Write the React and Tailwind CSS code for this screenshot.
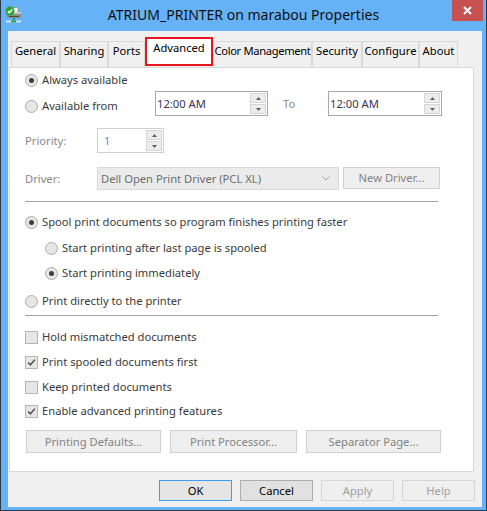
import React from 'react';

const font = { fontFamily: '"Noto Sans", "Liberation Sans", sans-serif' };

function PrinterIcon() {
  return (
    <svg width="17" height="17" viewBox="0 0 17 17">
      <rect x="5" y="1.5" width="8" height="5" fill="#fff" stroke="#9a9a9a" />
      <rect x="2" y="6" width="14" height="6" fill="#8c8c8c" />
      <rect x="2" y="6" width="14" height="2" fill="#c9c9c9" />
      <rect x="4" y="10" width="10" height="1" fill="#4a4a4a" />
      <rect x="8" y="12" width="2" height="3" fill="#1fa35a" />
      <rect x="1" y="14.5" width="15" height="2" fill="#cfe3ea" />
      <rect x="6" y="14.5" width="5" height="2" fill="#1fa35a" />
      <circle cx="5" cy="5" r="4.5" fill="#2aa52a" />
      <path d="M2.8 5.1 L4.4 6.7 L7.3 3.4" stroke="#fff" strokeWidth="1.5" fill="none" />
    </svg>
  );
}

function Radio({ checked, label }) {
  return (
    <div className="flex items-center gap-[4px]">
      <span className="flex h-[13px] w-[13px] items-center justify-center rounded-full border border-[#adadad] bg-[#e6e6e6]">
        {checked && <span className="h-[5px] w-[5px] rounded-full bg-[#3f3f3f]" />}
      </span>
      <span className="text-[#3a3a3a]">{label}</span>
    </div>
  );
}

function Check({ checked, label }) {
  return (
    <div className="flex items-center gap-[4px]">
      <span className="flex h-[13px] w-[13px] items-center justify-center border border-[#b5b5b5] bg-[#e6e6e6]">
        {checked && (
          <svg width="9" height="9" viewBox="0 0 9 9">
            <path d="M1.2 4.6 L3.4 6.8 L7.8 1.8" stroke="#555" strokeWidth="1.6" fill="none" />
          </svg>
        )}
      </span>
      <span className="text-[#3a3a3a]">{label}</span>
    </div>
  );
}

function Spin() {
  return (
    <div className="flex h-full w-[17px] flex-col gap-[1px] py-[1px] pr-[1px]">
      <div className="flex flex-1 items-center justify-center border border-[#d6d6d6] bg-[#ececec]">
        <svg width="5" height="3" viewBox="0 0 5 3"><path d="M0 3 L2.5 0 L5 3 Z" fill="#606060" /></svg>
      </div>
      <div className="flex flex-1 items-center justify-center border border-[#d6d6d6] bg-[#ececec]">
        <svg width="5" height="3" viewBox="0 0 5 3"><path d="M0 0 L2.5 3 L5 0 Z" fill="#606060" /></svg>
      </div>
    </div>
  );
}

function TimeBox({ w }) {
  return (
    <div className={`flex h-[25px] ${w} items-center justify-between border border-[#a9a9a9] bg-white pl-[1px]`}>
      <span className="text-[#3a3050]">12:00 AM</span>
      <Spin />
    </div>
  );
}

const tabs = [
  ['General', 'w-[49px]'],
  ['Sharing', 'w-[48px]'],
  ['Ports', 'w-[37px]'],
  ['Advanced', 'w-[68px]'],
  ['Color Management', 'w-[99px] tracking-[-0.35px]'],
  ['Security', 'w-[50px]'],
  ['Configure', 'w-[57px]'],
  ['About', 'w-[39px]'],
];

function SmallButton({ label, w }) {
  return (
    <div className={`flex h-[23px] ${w} items-center justify-center border border-[#d0d0d0] bg-[#efefef] text-[#838383]`}>
      {label}
    </div>
  );
}

export default function App() {
  return (
    <div className="h-[511px] w-[487px] border-x border-b border-[#2a3a4a] bg-[#66b2f7] text-[11.2px] leading-[16px]" style={font}>
      {/* title bar */}
      <div className="grid h-[31px] grid-cols-[1fr_auto_1fr]">
        <div className="pl-[4px] pt-[6px]">
          <PrinterIcon />
        </div>
        <div className="whitespace-nowrap pt-[5px] text-[14px] leading-[20px] text-[#111]">ATRIUM_PRINTER on marabou Properties</div>
        <div className="flex justify-end pr-[3px]">
          <div className="flex h-[21px] w-[31px] items-center justify-center bg-[#c75050]">
            <svg width="9" height="9" viewBox="0 0 9 9">
              <path d="M1 1 L8 8 M8 1 L1 8" stroke="#fff" strokeWidth="2" />
            </svg>
          </div>
        </div>
      </div>

      {/* body */}
      <div className="ml-[7px] mr-[4px] h-[476px] bg-[#f0f0f0] pt-[6px]">
        <div className="flex h-[30px] items-end whitespace-nowrap pl-[3px] text-black">
          {tabs.map(([name, w]) =>
            name === 'Advanced' ? (
              <div key={name} className={`${w} flex h-[29px] justify-center self-start border-2 border-[#e5161e] bg-white pt-[1px]`}>
                {name}
              </div>
            ) : (
              <div key={name} className={`${w} flex h-[26px] justify-center border-x border-t border-[#d9d9d9] bg-[#f0f0f0] pt-[1px]`}>
                {name}
              </div>
            )
          )}
        </div>

        {/* panel */}
        <div className="ml-[1px] flex h-[405px] w-[465px] flex-col border border-[#d9d9d9] bg-white pl-[15px]">
          <div className="flex h-[23px] items-center pt-[1px]">
            <Radio checked label="Always available" />
          </div>
          <div className="flex h-[25px] items-start">
            <div className="mt-[7px] w-[130px]">
              <Radio label="Available from" />
            </div>
            <TimeBox w="w-[113px]" />
            <div className="ml-[15px] flex h-[25px] w-[45px] items-center text-[#8a8a8a]">To</div>
            <TimeBox w="w-[114px]" />
          </div>
          <div className="mt-[12px] flex h-[25px] items-center">
            <div className="w-[72px] text-[#8a8a8a]">Priority:</div>
            <div className="flex h-[25px] w-[67px] items-center justify-between border border-[#cfcfcf] bg-white pl-[6px]">
              <span className="text-[#8c7f95]">1</span>
              <Spin />
            </div>
          </div>
          <div className="mt-[14px] flex h-[23px] items-start">
            <div className="flex h-[23px] w-[72px] items-center text-[#8a8a8a]">Driver:</div>
            <div className="flex h-[23px] w-[242px] items-center justify-between border border-[#d9d9d9] bg-[#ebebeb] pl-[3px] pr-[8px] text-[#6d6d6d]">
              <span>Dell Open Print Driver (PCL XL)</span>
              <svg width="8" height="5" viewBox="0 0 8 5"><path d="M0.5 0.5 L4 4 L7.5 0.5" stroke="#a8a8a8" fill="none" /></svg>
            </div>
            <div className="ml-[4px]">
              <div className="flex h-[22px] w-[97px] items-center justify-center border border-[#d0d0d0] bg-[#efefef] text-[#838383]">
                New Driver...
              </div>
            </div>
          </div>
          <div className="mt-[11px] h-px w-[413px] bg-[#a0a0a0]" />
          <div className="mt-[10px] flex h-[20px] items-center">
            <Radio checked label="Spool print documents so program finishes printing faster" />
          </div>
          <div className="mt-[6px] flex h-[20px] items-center pl-[20px]">
            <Radio label="Start printing after last page is spooled" />
          </div>
          <div className="mt-[5px] flex h-[20px] items-center pl-[20px]">
            <Radio checked label="Start printing immediately" />
          </div>
          <div className="mt-[8px] flex h-[20px] items-center">
            <Radio label="Print directly to the printer" />
          </div>
          <div className="mt-[4px] h-px w-[413px] bg-[#a0a0a0]" />
          <div className="mt-[11px] flex h-[20px] items-center">
            <Check label="Hold mismatched documents" />
          </div>
          <div className="mt-[5px] flex h-[20px] items-center">
            <Check checked label="Print spooled documents first" />
          </div>
          <div className="mt-[5px] flex h-[20px] items-center">
            <Check label="Keep printed documents" />
          </div>
          <div className="mt-[4px] flex h-[20px] items-center">
            <Check checked label="Enable advanced printing features" />
          </div>
          <div className="ml-[1px] mt-[9px] flex gap-[9px]">
            <SmallButton label="Printing Defaults..." w="w-[135px]" />
            <SmallButton label="Print Processor..." w="w-[127px]" />
            <SmallButton label="Separator Page..." w="w-[135px]" />
          </div>
        </div>

        {/* dialog buttons */}
        <div className="mt-[8px] flex justify-end gap-[8px] pr-[7px]">
          <div className="flex h-[21px] w-[73px] items-center justify-center border border-[#3c9ef0] bg-[#e5e5e5] text-black">OK</div>
          <div className="flex h-[21px] w-[73px] items-center justify-center border border-[#adadad] bg-[#e1e1e1] text-black">Cancel</div>
          <div className="flex h-[21px] w-[73px] items-center justify-center border border-[#d5d5d5] bg-[#efefef] text-[#a0a0a0]">Apply</div>
          <div className="flex h-[21px] w-[73px] items-center justify-center border border-[#d5d5d5] bg-[#efefef] text-[#a0a0a0]">Help</div>
        </div>
      </div>
    </div>
  );
}
